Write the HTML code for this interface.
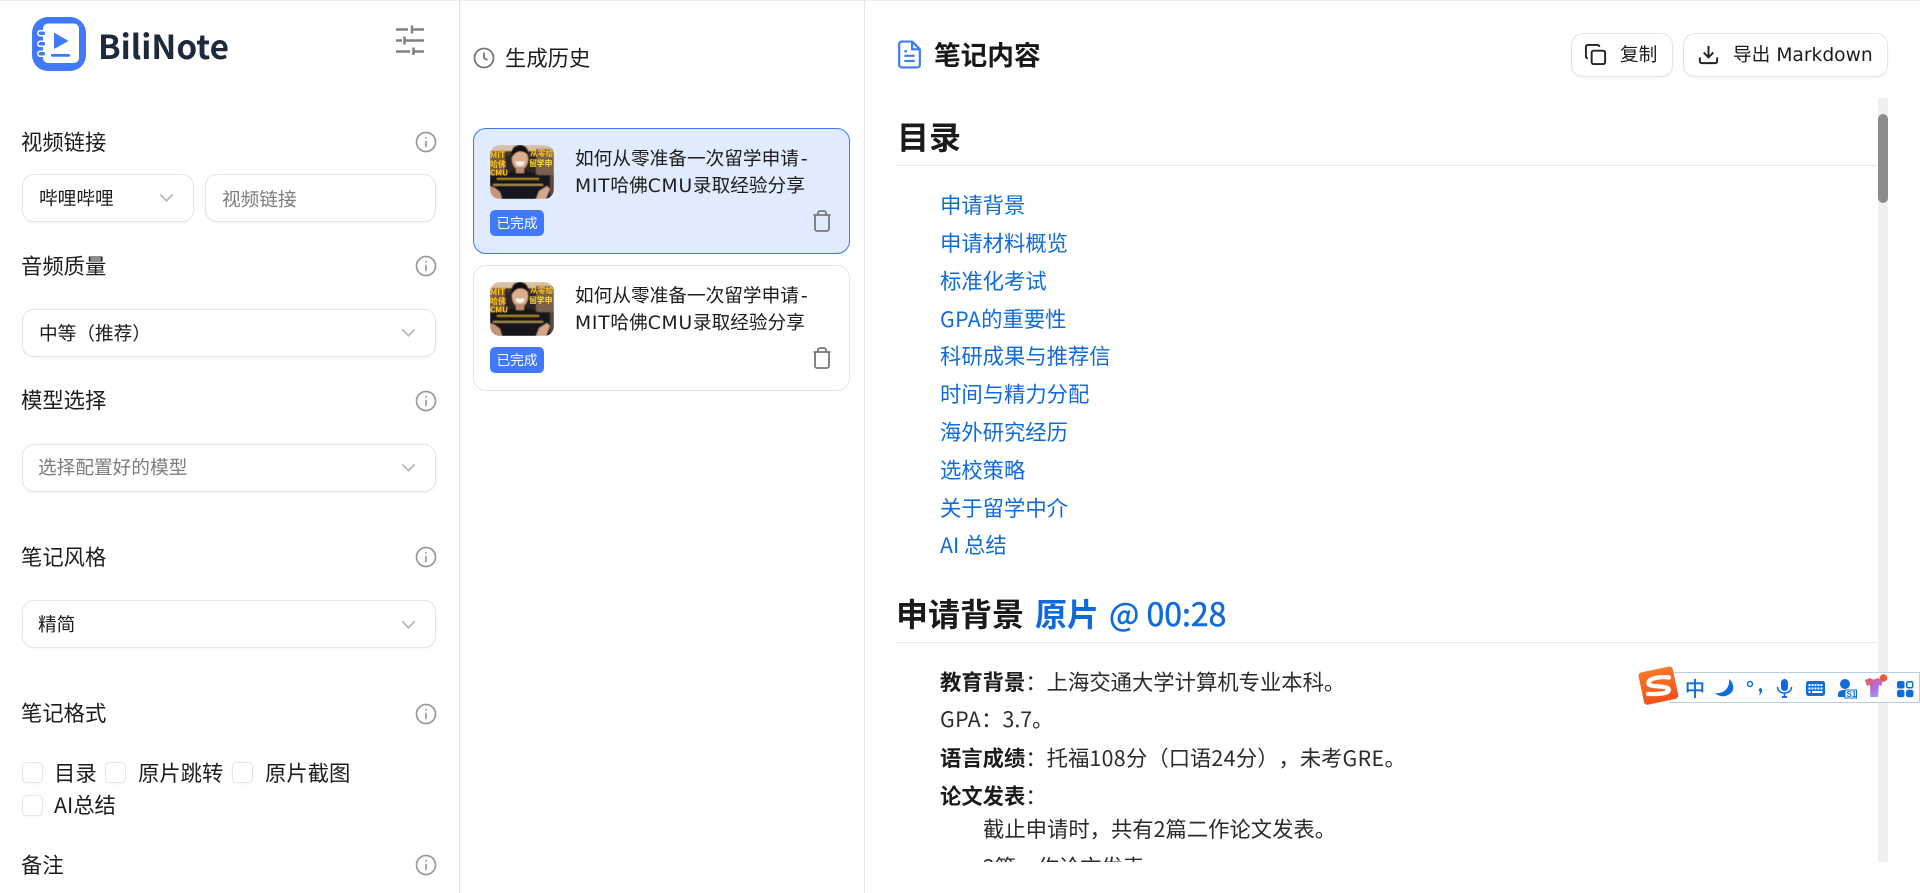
<!DOCTYPE html>
<html lang="zh-CN">
<head>
<meta charset="utf-8">
<title>BiliNote</title>
<style>
html,body{margin:0;padding:0;width:1920px;height:893px;overflow:hidden;background:#fff}
body{position:relative;font-family:"Noto Sans CJK SC","Liberation Sans",sans-serif;color:#1c1c1c;font-size:21.33px;text-spacing-trim:space-all;text-autospace:no-autospace}
.t{position:absolute;white-space:nowrap;line-height:30px;height:30px}
.s{font-size:18.67px}
.d{font-family:"DejaVu Sans","Noto Sans CJK SC",sans-serif}
.w{letter-spacing:.8px}
.n{letter-spacing:.4px}
.box{position:absolute;box-sizing:border-box;background:#fff;border:1px solid #e5e5e5;border-radius:12px;box-shadow:0 1px 2px rgba(0,0,0,.05)}
.cb{position:absolute;box-sizing:border-box;width:21px;height:21px;background:#fff;border:1px solid #e5e5e5;border-radius:5px;box-shadow:0 1px 2px rgba(0,0,0,.05)}
svg{position:absolute;display:block;overflow:visible}
.ph{color:#7d7d7d}
.lnk{color:#0f6bdc;left:940px}
.li{left:940px;color:#2b2b2b}
.li b{color:#1c1c1c}
.badge{position:absolute;left:490px;width:54px;height:26px;background:#4079fb;border-radius:5px;color:#fff;font-size:13.7px;line-height:25px;text-align:center}
.line{position:absolute;background:#e5e7eb}
.card{position:absolute;left:473px;width:377px;height:126px;box-sizing:border-box;border-radius:13px}
.ct{position:absolute;left:575px;font-size:18.67px;white-space:nowrap;line-height:30px;color:#1c1c1c}
.l{left:21px}
</style>
</head>
<body>
<div class="line" style="left:0;top:0;width:1920px;height:1px;background:#eeeeee"></div>
<div class="line" style="left:459px;top:0;width:1px;height:893px;background:#e5e5e5"></div>
<div class="line" style="left:864px;top:0;width:1px;height:893px;background:#e5e5e5"></div>

<!-- logo -->
<svg style="left:32px;top:17px" width="54" height="54" viewBox="0 0 54 54">
<rect width="54" height="54" rx="16" fill="#4079fb"/>
<rect x="11" y="6.500" width="36" height="39.500" rx="5" fill="#fff"/>
<rect x="5.800" y="13.800" width="8" height="5" rx="2.500" fill="#4079fb" stroke="#fff" stroke-width="1.500"/>
<rect x="5.800" y="24.300" width="8" height="5" rx="2.500" fill="#4079fb" stroke="#fff" stroke-width="1.500"/>
<rect x="5.800" y="34.300" width="8" height="5" rx="2.500" fill="#4079fb" stroke="#fff" stroke-width="1.500"/>
<path d="M22 15.500 L36.500 24 L22 32 Z" fill="#4079fb"/>
<rect x="19" y="37" width="19" height="2.800" rx="1" fill="#4079fb"/>
</svg>
<div class="t" style="left:98px;top:25px;height:40px;line-height:40px;font-size:33.300px;font-weight:700;color:#1e293b">BiliNote</div>
<svg style="left:395px;top:24px" width="30" height="32" viewBox="0 0 30 32" fill="none" stroke="#808080" stroke-width="2.500">
<path d="M1 5.500H13M17 5.500H29M17 1.500V9.500M1 16.500H7M9.500 16.500H29M9.500 12.500V20.500M1 27.500H15M18.500 27.500H29M18.500 23.500V31"/>
</svg>

<!-- sidebar -->
<div class="t l" style="top:127px">视频链接</div>
<svg style="left:414px;top:130px" width="24" height="24" viewBox="0 0 24 24" fill="none" stroke="#999" stroke-width="1.700"><circle cx="12" cy="12" r="9.500"/><path d="M12 11.500v5M12 7.600v.4" stroke-linecap="round"/></svg>
<div class="box" style="left:22px;top:174px;width:172px;height:48px"></div>
<div class="t s" style="left:39px;top:183px">哔哩哔哩</div>
<svg style="left:154px;top:185px" width="25" height="25" viewBox="0 0 24 24" fill="none" stroke="#bbb" stroke-width="1.800"><path d="M6 9l6 6 6-6"/></svg>
<div class="box" style="left:205px;top:174px;width:231px;height:48px"></div>
<div class="t s ph" style="left:222px;top:184px">视频链接</div>

<div class="t l" style="top:251px">音频质量</div>
<svg style="left:414px;top:254px" width="24" height="24" viewBox="0 0 24 24" fill="none" stroke="#999" stroke-width="1.700"><circle cx="12" cy="12" r="9.500"/><path d="M12 11.500v5M12 7.600v.4" stroke-linecap="round"/></svg>
<div class="box" style="left:22px;top:309px;width:414px;height:48px"></div>
<div class="t s" style="left:39px;top:318px">中等（推荐）</div>
<svg style="left:396px;top:320px" width="25" height="25" viewBox="0 0 24 24" fill="none" stroke="#bbb" stroke-width="1.800"><path d="M6 9l6 6 6-6"/></svg>

<div class="t l" style="top:385px">模型选择</div>
<svg style="left:414px;top:389px" width="24" height="24" viewBox="0 0 24 24" fill="none" stroke="#999" stroke-width="1.700"><circle cx="12" cy="12" r="9.500"/><path d="M12 11.500v5M12 7.600v.4" stroke-linecap="round"/></svg>
<div class="box" style="left:22px;top:444px;width:414px;height:48px"></div>
<div class="t s ph" style="left:38px;top:452px">选择配置好的模型</div>
<svg style="left:396px;top:455px" width="25" height="25" viewBox="0 0 24 24" fill="none" stroke="#bbb" stroke-width="1.800"><path d="M6 9l6 6 6-6"/></svg>

<div class="t l" style="top:542px">笔记风格</div>
<svg style="left:414px;top:545px" width="24" height="24" viewBox="0 0 24 24" fill="none" stroke="#999" stroke-width="1.700"><circle cx="12" cy="12" r="9.500"/><path d="M12 11.500v5M12 7.600v.4" stroke-linecap="round"/></svg>
<div class="box" style="left:22px;top:600px;width:414px;height:48px"></div>
<div class="t s" style="left:38px;top:609px">精简</div>
<svg style="left:396px;top:612px" width="25" height="25" viewBox="0 0 24 24" fill="none" stroke="#bbb" stroke-width="1.800"><path d="M6 9l6 6 6-6"/></svg>

<div class="t l" style="top:698px">笔记格式</div>
<svg style="left:414px;top:702px" width="24" height="24" viewBox="0 0 24 24" fill="none" stroke="#999" stroke-width="1.700"><circle cx="12" cy="12" r="9.500"/><path d="M12 11.500v5M12 7.600v.4" stroke-linecap="round"/></svg>
<div class="cb" style="left:22px;top:762px"></div>
<div class="t" style="left:54px;top:758px">目录</div>
<div class="cb" style="left:105px;top:762px"></div>
<div class="t" style="left:138px;top:758px">原片跳转</div>
<div class="cb" style="left:232px;top:762px"></div>
<div class="t" style="left:265px;top:758px">原片截图</div>
<div class="cb" style="left:22px;top:795px"></div>
<div class="t" style="left:54px;top:790px">AI总结</div>
<div class="t l" style="top:850px">备注</div>
<svg style="left:414px;top:853px" width="24" height="24" viewBox="0 0 24 24" fill="none" stroke="#999" stroke-width="1.700"><circle cx="12" cy="12" r="9.500"/><path d="M12 11.500v5M12 7.600v.4" stroke-linecap="round"/></svg>

<!-- history -->
<svg style="left:472px;top:46px" width="24" height="24" viewBox="0 0 24 24" fill="none" stroke="#777" stroke-width="1.800"><circle cx="12" cy="12" r="9.500"/><path d="M12 6.500V12l3.500 2"/></svg>
<div class="t" style="left:505px;top:43px">生成历史</div>

<div class="card" style="top:128px;background:#e0ecfe;border:1px solid #3b78f6"></div>
<svg style="left:490px;top:145px" width="64" height="54" viewBox="0 0 64 54">
<clipPath id="c1"><rect width="64" height="54" rx="10"/></clipPath>
<filter id="b1" x="0" y="0" width="100%" height="100%"><feGaussianBlur stdDeviation=".4"/></filter>
<g clip-path="url(#c1)"><g filter="url(#b1)">
<rect width="64" height="54" fill="#4a3628"/>
<rect width="64" height="6" fill="#d8bfa6"/>
<rect x="0" y="6" width="15" height="24" fill="#7a5c42"/>
<rect x="46" y="4" width="18" height="26" fill="#7a6250"/>
<rect x="15" y="10" width="31" height="22" fill="#2e2722"/>
<rect x="0" y="30" width="64" height="24" fill="#17151a"/>
<path d="M11 33C14 28 22 26 31 26S47 28 51 33Z" fill="#17151a"/>
<ellipse cx="30" cy="14" rx="8" ry="11" fill="#dcae8e"/>
<rect x="26" y="22" width="8" height="6" fill="#c08c70"/>
<path d="M21.500 13C20 3 25 0 30 0S39.500 3 38.500 12C37.500 8 33 6.500 30 6.500S24 9 21.500 13Z" fill="#15100e"/>
<path d="M25.500 16.500H34.500C34 20 32 21 30 21S26 20 25.500 16.500Z" fill="#f7f1ea"/>
<rect x="7" y="33" width="42" height="1.800" fill="#d8a820" opacity=".8"/>
<rect x="3" y="39" width="50" height="1.800" fill="#d8c060" opacity=".75"/>
<path d="M0 41L5 43 10 47 12 54H0Z" fill="#c9957a"/>
<path d="M46 54L49 46 57 41 60 44 56 54Z" fill="#d2a58c"/>
<rect x="60" y="30" width="4" height="24" fill="#5c4a3c"/>
</g>
<g font-family="Noto Sans CJK SC,sans-serif" font-weight="700" fill="#ffc20a">
<text x="0" y="13" font-size="8.500">MIT</text><text x="0" y="22" font-size="8">哈佛</text><text x="0" y="30.500" font-size="8">CMU</text>
<text x="40" y="11" font-size="7.800">从零给</text><text x="39" y="21" font-size="7.800" fill="#ffd83a">留学申</text>
</g></g>
</svg>
<div class="ct" style="top:143px">如何从零准备一次留学申请<span class="d" style="margin-left:2px">-</span></div>
<div class="ct" style="top:170px"><span class="d w">MIT</span>哈佛<span class="d w">CMU</span>录取经验分享</div>
<div class="badge" style="top:210px">已完成</div>
<svg style="left:810px;top:209px" width="24" height="24" viewBox="0 0 24 24" fill="none" stroke="#777" stroke-width="1.800"><path d="M3.500 6h17M19 6v14c0 1-1 2-2 2H7c-1 0-2-1-2-2V6M8 6V4c0-1 1-2 2-2h4c1 0 2 1 2 2v2"/></svg>

<div class="card" style="top:265px;background:#fff;border:1px solid #e5e5e5"></div>
<svg style="left:490px;top:282px" width="64" height="54" viewBox="0 0 64 54">
<clipPath id="c2"><rect width="64" height="54" rx="10"/></clipPath>
<filter id="b2" x="0" y="0" width="100%" height="100%"><feGaussianBlur stdDeviation=".4"/></filter>
<g clip-path="url(#c2)"><g filter="url(#b2)">
<rect width="64" height="54" fill="#4a3628"/>
<rect width="64" height="6" fill="#d8bfa6"/>
<rect x="0" y="6" width="15" height="24" fill="#7a5c42"/>
<rect x="46" y="4" width="18" height="26" fill="#7a6250"/>
<rect x="15" y="10" width="31" height="22" fill="#2e2722"/>
<rect x="0" y="30" width="64" height="24" fill="#17151a"/>
<path d="M11 33C14 28 22 26 31 26S47 28 51 33Z" fill="#17151a"/>
<ellipse cx="30" cy="14" rx="8" ry="11" fill="#dcae8e"/>
<rect x="26" y="22" width="8" height="6" fill="#c08c70"/>
<path d="M21.500 13C20 3 25 0 30 0S39.500 3 38.500 12C37.500 8 33 6.500 30 6.500S24 9 21.500 13Z" fill="#15100e"/>
<path d="M25.500 16.500H34.500C34 20 32 21 30 21S26 20 25.500 16.500Z" fill="#f7f1ea"/>
<rect x="7" y="33" width="42" height="1.800" fill="#d8a820" opacity=".8"/>
<rect x="3" y="39" width="50" height="1.800" fill="#d8c060" opacity=".75"/>
<path d="M0 41L5 43 10 47 12 54H0Z" fill="#c9957a"/>
<path d="M46 54L49 46 57 41 60 44 56 54Z" fill="#d2a58c"/>
<rect x="60" y="30" width="4" height="24" fill="#5c4a3c"/>
</g>
<g font-family="Noto Sans CJK SC,sans-serif" font-weight="700" fill="#ffc20a">
<text x="0" y="13" font-size="8.500">MIT</text><text x="0" y="22" font-size="8">哈佛</text><text x="0" y="30.500" font-size="8">CMU</text>
<text x="40" y="11" font-size="7.800">从零给</text><text x="39" y="21" font-size="7.800" fill="#ffd83a">留学申</text>
</g></g>
</svg>
<div class="ct" style="top:280px">如何从零准备一次留学申请<span class="d" style="margin-left:2px">-</span></div>
<div class="ct" style="top:307px"><span class="d w">MIT</span>哈佛<span class="d w">CMU</span>录取经验分享</div>
<div class="badge" style="top:347px">已完成</div>
<svg style="left:810px;top:346px" width="24" height="24" viewBox="0 0 24 24" fill="none" stroke="#777" stroke-width="1.800"><path d="M3.500 6h17M19 6v14c0 1-1 2-2 2H7c-1 0-2-1-2-2V6M8 6V4c0-1 1-2 2-2h4c1 0 2 1 2 2v2"/></svg>

<!-- note header -->
<svg style="left:894px;top:39px" width="31" height="31" viewBox="0 0 24 24" fill="none" stroke="#4079fb" stroke-width="1.700" stroke-linejoin="round"><path d="M14 2H6a2 2 0 0 0-2 2v16a2 2 0 0 0 2 2h12a2 2 0 0 0 2-2V8z"/><path d="M14 2v6h6M8 13h8M8 17h8M8 9.500h2"/></svg>
<div class="t" style="left:934px;top:34px;height:40px;line-height:40px;font-size:26.67px;font-weight:700;color:#171717">笔记内容</div>
<div class="box" style="left:1571px;top:33px;width:102px;height:44px"></div>
<svg style="left:1584px;top:43px" width="23" height="23" viewBox="0 0 24 24" fill="none" stroke="#222" stroke-width="2"><rect x="8" y="8" width="14" height="14" rx="2"/><path d="M4 16c-1.100 0-2-.9-2-2V4c0-1.100.9-2 2-2h10c1.100 0 2 .9 2 2"/></svg>
<div class="t s" style="left:1620px;top:39px">复制</div>
<div class="box" style="left:1683px;top:33px;width:205px;height:44px"></div>
<svg style="left:1697px;top:43px" width="23" height="23" viewBox="0 0 24 24" fill="none" stroke="#222" stroke-width="2"><path d="M21 15v4a2 2 0 0 1-2 2H5a2 2 0 0 1-2-2v-4M7 10l5 5 5-5M12 15V3"/></svg>
<div class="t s" style="left:1733px;top:39px">导出<span style="margin-left:6px" class="d">Markdown</span></div>

<!-- scroll -->
<div style="position:absolute;left:1878px;top:98px;width:10px;height:764px;background:#f0f0f0"></div>
<div style="position:absolute;left:1878px;top:114px;width:10px;height:89px;background:#8c8c8c;border-radius:5px"></div>

<!-- note body -->
<div style="position:absolute;left:880px;top:98px;width:998px;height:764px;overflow:hidden">
<div style="position:absolute;left:-880px;top:-98px;width:1878px;height:862px">
<div class="t" style="left:897px;top:116px;height:40px;line-height:40px;font-size:32px;font-weight:700;color:#1a1a1a">目录</div>
<div class="line" style="left:896px;top:165px;width:982px;height:1px"></div>
<div class="t lnk" style="top:190px">申请背景</div>
<div class="t lnk" style="top:228px">申请材料概览</div>
<div class="t lnk" style="top:266px">标准化考试</div>
<div class="t lnk" style="top:304px"><span class="n">GPA</span>的重要性</div>
<div class="t lnk" style="top:341px">科研成果与推荐信</div>
<div class="t lnk" style="top:379px">时间与精力分配</div>
<div class="t lnk" style="top:417px">海外研究经历</div>
<div class="t lnk" style="top:455px">选校策略</div>
<div class="t lnk" style="top:493px">关于留学中介</div>
<div class="t lnk" style="top:530px">AI 总结</div>
<div class="t" style="left:896px;top:593px;height:40px;line-height:40px;font-size:32px;font-weight:700;color:#1a1a1a">申请背景</div>
<div class="t" style="left:1035px;top:593px;height:40px;line-height:40px;font-size:32px;font-weight:700;color:#0f6bdc">原片</div>
<div class="t" style="left:1109px;top:593px;height:40px;line-height:40px;font-size:32px;color:#0f6bdc;-webkit-text-stroke:.5px #0f6bdc">@ 00:28</div>
<div class="line" style="left:896px;top:642px;width:982px;height:1px"></div>
<div class="t li" style="top:667px"><b>教育背景</b>：上海交通大学计算机专业本科。</div>
<div class="t li" style="top:704px"><span class="n">GPA</span>：3.7。</div>
<div class="t li" style="top:743px"><b>语言成绩</b>：托福<span class="n">108</span>分（口语<span class="n">24</span>分），未考<span class="n">GRE</span>。</div>
<div class="t li" style="top:781px"><b>论文发表</b>：</div>
<div class="t li" style="left:983px;top:814px">截止申请时，共有2篇二作论文发表。</div>
<div class="t li" style="left:983px;top:832px;height:30px;overflow:hidden"><span style="position:relative;top:20px">2篇一作论文发表。</span></div>
</div>
</div>

<!-- IME bar -->
<div style="position:absolute;left:1670px;top:672px;width:250px;height:31px;box-sizing:border-box;background:#fff;border:1px solid #b9cde8"></div>
<svg style="left:1636px;top:664px" width="46" height="44" viewBox="0 0 46 44">
<defs><linearGradient id="og" x1="0" y1="0" x2="0" y2="1"><stop offset="0" stop-color="#f5792a"/><stop offset="1" stop-color="#f4501a"/></linearGradient></defs>
<rect x="5" y="5" width="35" height="33" rx="3.500" fill="url(#og)" transform="rotate(-12 23 22)"/>
<path d="M33 13.500C26 12.500 14 13.500 12.500 18.500 11.500 22 19 22 24 22.500 29 23 35 24 32 27.500 28 30.500 18 30 12 30" fill="none" stroke="#fff" stroke-width="4.300" stroke-linecap="round"/>
</svg>
<div style="position:absolute;left:1685px;top:673px;width:20px;height:30px;line-height:30px;font-size:20px;color:#0d6ddb;-webkit-text-stroke:.4px #0d6ddb;text-align:center">中</div>
<svg style="left:1714px;top:678px" width="22" height="20" viewBox="0 0 22 20"><path d="M15 1C21 6 21 14 14 17 8 20 3 17 1 15 8 16 16 12 15 1Z" fill="#0d6ddb"/></svg>
<svg style="left:1746px;top:680px" width="20" height="17" viewBox="0 0 20 17"><circle cx="4" cy="4" r="2.500" fill="none" stroke="#0d6ddb" stroke-width="1.500"/><path d="M14.500 8c2 .5 2 3 1 4.500-.7 1.200-1.700 2.500-2.500 3 .5-1.500 1-2.500.9-3.500-1.700-1-.9-4.200.6-4Z" fill="#0d6ddb"/></svg>
<svg style="left:1776px;top:678px" width="17" height="21" viewBox="0 0 17 21" fill="none"><rect x="5" y="1" width="7" height="12" rx="3.500" fill="#0d6ddb"/><path d="M1.500 9c0 8 14 8 14 0M8.500 15v3" stroke="#0d6ddb" stroke-width="1.500"/><rect x="6" y="18" width="5" height="2" fill="#0d6ddb"/></svg>
<svg style="left:1806px;top:681px" width="19" height="16" viewBox="0 0 19 16"><rect width="19" height="15" rx="2.500" fill="#0d6ddb"/><g fill="#fff"><rect x="2.500" y="3" width="2" height="2"/><rect x="5.500" y="3" width="2" height="2"/><rect x="8.500" y="3" width="2" height="2"/><rect x="11.500" y="3" width="2" height="2"/><rect x="14.500" y="3" width="2" height="2"/><rect x="2.500" y="6.500" width="2" height="2"/><rect x="5.500" y="6.500" width="2" height="2"/><rect x="8.500" y="6.500" width="2" height="2"/><rect x="11.500" y="6.500" width="2" height="2"/><rect x="14.500" y="6.500" width="2" height="2"/><rect x="2.500" y="10" width="2" height="2"/><rect x="6" y="10" width="10.500" height="2"/></g></svg>
<svg style="left:1837px;top:678px" width="20" height="20" viewBox="0 0 20 20"><circle cx="8" cy="6" r="5" fill="#0d6ddb"/><path d="M1 19v-3c0-3 3-4 7-4s6 1 6 1v6Z" fill="#0d6ddb"/><rect x="8" y="12" width="11.500" height="8" fill="#fff" stroke="#0d6ddb"/><text x="9.500" y="19" font-size="8" font-weight="700" font-family="Liberation Sans,sans-serif" fill="#0d6ddb">S1</text></svg>
<svg style="left:1864px;top:673px" width="24" height="25" viewBox="0 0 24 25">
<defs><linearGradient id="sh" x1="0" y1="0" x2="1" y2="1"><stop offset="0" stop-color="#f0583e"/><stop offset=".55" stop-color="#b06fe8"/><stop offset="1" stop-color="#7fb8f5"/></linearGradient></defs>
<path d="M1 7L6 5c2 2 5 2 7 0l6 2-1.500 6-2.500-1-1 12H6.500L6 12l-3 1Z" fill="url(#sh)"/><circle cx="19.500" cy="5" r="3.800" fill="#f45a35"/></svg>
<svg style="left:1897px;top:681px" width="17" height="17" viewBox="0 0 17 17"><g fill="#0d6ddb"><rect width="7.500" height="7.500" rx="2"/><rect y="8.800" width="7.500" height="7.500" rx="2.500"/><rect x="9" y="8.800" width="7.500" height="7.500" rx="2.500"/><rect x="9.700" y=".7" width="6" height="6" rx="1.500" fill="none" stroke="#0d6ddb" stroke-width="1.500"/></g></svg>
</body>
</html>
